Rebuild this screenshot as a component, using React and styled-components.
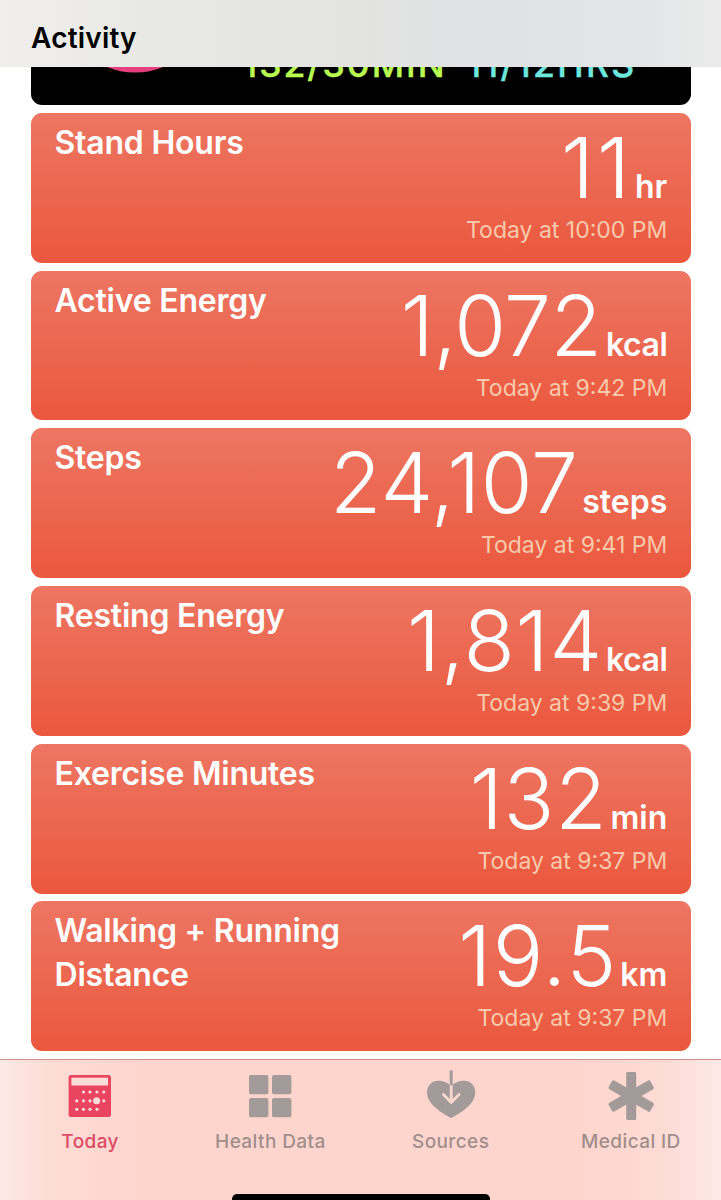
import React from "react"
import styled, {createGlobalStyle} from "styled-components"

const GlobalStyle = createGlobalStyle`
    * {
        box-sizing: border-box;
    }

    body {
        margin: 0;
        background: #fff;
        font-family: Inter, "Liberation Sans", sans-serif;
    }
`

const Screen = styled.div`
    display: flex;
    flex-direction: column;
    width: 721px;
    height: 1200px;
    overflow: hidden;
`

const Header = styled.header`
    flex: none;
    height: 67px;
    padding: 20px 31px 0;
    background: linear-gradient(90deg, #f0efee 0%, #e8e8e4 20%, #e3e3e1 48%, #e0e2e4 68%, #e2e4e5 88%, #ebebeb 100%);
`

const HeaderTitle = styled.h1`
    margin: 0;
    font-size: 28px;
    line-height: 37px;
    font-weight: 580;
    letter-spacing: 0.2px;
    color: #000;
`

const Feed = styled.main`
    flex: 1;
    min-height: 0;
    display: flex;
    flex-direction: column;
    padding: 0 30.5px;
    overflow: hidden;
`

const Rings = styled.section`
    flex: none;
    display: flex;
    align-items: flex-end;
    height: 38px;
    margin-bottom: 8px;
    padding-bottom: 19px;
    border-radius: 0 0 11px 11px;
    background: #000;
    overflow: hidden;
`

const MoveRing = styled.svg`
    flex: none;
    width: 212px;
    height: 130px;
    margin-bottom: 13.5px;
`

const Goal = styled.span`
    flex: none;
    width: ${props => props.$width}px;
    font-size: 35.5px;
    line-height: 42px;
    font-weight: 500;
    letter-spacing: ${props => props.$spacing}px;
    white-space: nowrap;
    color: ${props => props.$color};
    -webkit-text-stroke: 0.4px ${props => props.$color};
`

const Card = styled.section`
    flex: none;
    display: flex;
    justify-content: space-between;
    height: 149.8px;
    margin-bottom: 7.9px;
    padding: 8px 23.2px 0 24px;
    border-radius: 11px;
    background: linear-gradient(#ed7662, #ea583e);
    color: #fff;
`

const CardTitle = styled.h2`
    width: 300px;
    margin: 0;
    font-size: 32px;
    line-height: 43.5px;
    font-weight: 570;
    letter-spacing: -0.22px;
    white-space: pre-line;
`

const Reading = styled.div`
    display: flex;
    flex-direction: column;
    align-items: flex-end;
    white-space: nowrap;
`

const Amount = styled.div`
    display: flex;
    align-items: baseline;
    height: 94px;
    line-height: 93px;
`

const Value = styled.span`
    font-size: 84px;
    font-weight: 310;
    letter-spacing: ${props => props.$spacing}px;
`

const Unit = styled.span`
    margin-left: ${props => props.$gap}px;
    font-size: 32px;
    font-weight: 570;
    letter-spacing: ${props => props.$spacing || 0}px;
`

const Time = styled.time`
    font-size: 23px;
    line-height: 30px;
    color: #fbc9a9;
    letter-spacing: 0;
`

const TabBar = styled.nav`
    position: relative;
    flex: none;
    display: grid;
    grid-template-columns: repeat(4, 180.25px);
    height: 141px;
    padding-top: 10px;
    border-top: 1px solid #cf8d8c;
    background: linear-gradient(90deg, #fce9e5 0%, #fddcd5 7%, #fdd5cd 20%, #fdd5cd 80%, #fddbd5 92%, #fde9e6 100%);
`

const Tab = styled.a`
    display: flex;
    flex-direction: column;
    align-items: center;
    gap: 8px;
    font-size: 19px;
    line-height: 24px;
    font-weight: 500;
    letter-spacing: 0.4px;
    color: ${props => props.$active ? "#dc4a65" : "#a08e8c"};

    svg {
        display: block;
        width: 54px;
        height: 52px;
    }
`

const HomeIndicator = styled.div`
    position: absolute;
    left: 232px;
    bottom: 0;
    width: 258px;
    height: 6px;
    border-radius: 5px 5px 0 0;
    background: #000;
`

const cards = [
    {title: "Stand Hours", value: "11", spacing: 3, unit: "hr", gap: 2, time: "Today at 10:00 PM"},
    {title: "Active Energy", value: "1,072", spacing: -0.5, unit: "kcal", gap: 4.5, time: "Today at 9:42 PM"},
    {title: "Steps", value: "24,107", spacing: 0.2, unit: "steps", gap: 4, time: "Today at 9:41 PM"},
    {title: "Resting Energy", value: "1,814", spacing: 0.8, unit: "kcal", gap: 3, time: "Today at 9:39 PM"},
    {title: "Exercise Minutes", value: "132", spacing: 0.8, unit: "min", gap: 3, time: "Today at 9:37 PM"},
    {title: "Walking + Running\nDistance", value: "19.5", spacing: 1.4, unit: "km", gap: 2.5, time: "Today at 9:37 PM"},
]

const calendarDots = [
    [21.5, 22], [28, 22], [35, 22], [41.8, 22],
    [14.8, 30.8], [21.5, 30.8], [28, 30.8], [41.8, 30.8],
    [14.8, 39.3], [21.5, 39.3], [28, 39.3], [35, 39.3],
]

const CalendarIcon = () => (
    <svg viewBox="0 0 54 52">
        <rect x="5.6" y="5" width="42.4" height="42" rx="2.5" fill="#ea4560"/>
        <rect x="8.4" y="7.7" width="36.6" height="7.8" fill="#fddcd6"/>
        {calendarDots.map(([x, y]) => (
            <circle key={`${x}-${y}`} cx={x - 1} cy={y} r="1.6" fill="#fddcd6"/>
        ))}
        <circle cx="33.6" cy="30.8" r="3.5" fill="#fddcd6"/>
    </svg>
)

const GridIcon = () => (
    <svg viewBox="0 0 54 52" fill="#a29b9a">
        <rect x="6" y="5" width="19.4" height="19.2" rx="2"/>
        <rect x="29" y="5" width="19.4" height="19.2" rx="2"/>
        <rect x="6" y="28" width="19.4" height="19.2" rx="2"/>
        <rect x="29" y="28" width="19.4" height="19.2" rx="2"/>
    </svg>
)

const SourcesIcon = () => (
    <svg viewBox="0 0 54 52" fill="none" strokeLinecap="round" strokeLinejoin="round">
        <path d="M27.2 48C23.5 46 3 36 3 22.5C3 15.5 8 10.8 14.5 10.8C20 10.8 25 13.4 27.2 16.6C29.4 13.4 34.4 10.8 40 10.8C46.4 10.8 51.3 15.5 51.3 22.5C51.3 36 30.9 46 27.2 48Z" fill="#a29b9a"/>
        <path d="M27.2 13V32.5M19.4 24.6L27.2 32.4L35 24.6" stroke="#fdd8d1" strokeWidth="2.8"/>
        <path d="M27.2 1.6V14" stroke="#a29b9a" strokeWidth="3"/>
    </svg>
)

const MedicalIcon = () => (
    <svg viewBox="0 0 54 52" fill="#a29b9a">
        {[0, 60, 120].map(angle => (
            <rect key={angle} x="22.2" y="2" width="10" height="48" rx="1.6" transform={`rotate(${angle} 27.2 26)`}/>
        ))}
    </svg>
)

const tabs = [
    {label: "Today", Icon: CalendarIcon, active: true},
    {label: "Health Data", Icon: GridIcon},
    {label: "Sources", Icon: SourcesIcon},
    {label: "Medical ID", Icon: MedicalIcon},
]

const App = () => {
    return (
        <Screen>
            <GlobalStyle/>
            <Header>
                <HeaderTitle>Activity</HeaderTitle>
            </Header>
            <Feed>
                <Rings>
                    <MoveRing viewBox="0 0 212 130">
                        <circle cx="104" cy="58.5" r="62" fill="none" stroke="#e7407f" strokeWidth="18"/>
                    </MoveRing>
                    <Goal $color="#b9fb52" $width={224} $spacing={2}>132/30MIN</Goal>
                    <Goal $color="#6ee7df" $width={190} $spacing={2.3}>11/12HRS</Goal>
                </Rings>
                {cards.map(card => (
                    <Card key={card.title}>
                        <CardTitle>{card.title}</CardTitle>
                        <Reading>
                            <Amount>
                                <Value $spacing={card.spacing}>{card.value}</Value>
                                <Unit $gap={card.gap} $spacing={card.unit === "kcal" ? -0.5 : 0}>{card.unit}</Unit>
                            </Amount>
                            <Time>{card.time}</Time>
                        </Reading>
                    </Card>
                ))}
            </Feed>
            <TabBar>
                {tabs.map(({label, Icon, active}) => (
                    <Tab key={label} $active={active}>
                        <Icon/>
                        {label}
                    </Tab>
                ))}
                <HomeIndicator/>
            </TabBar>
        </Screen>
    )
}

export default App
